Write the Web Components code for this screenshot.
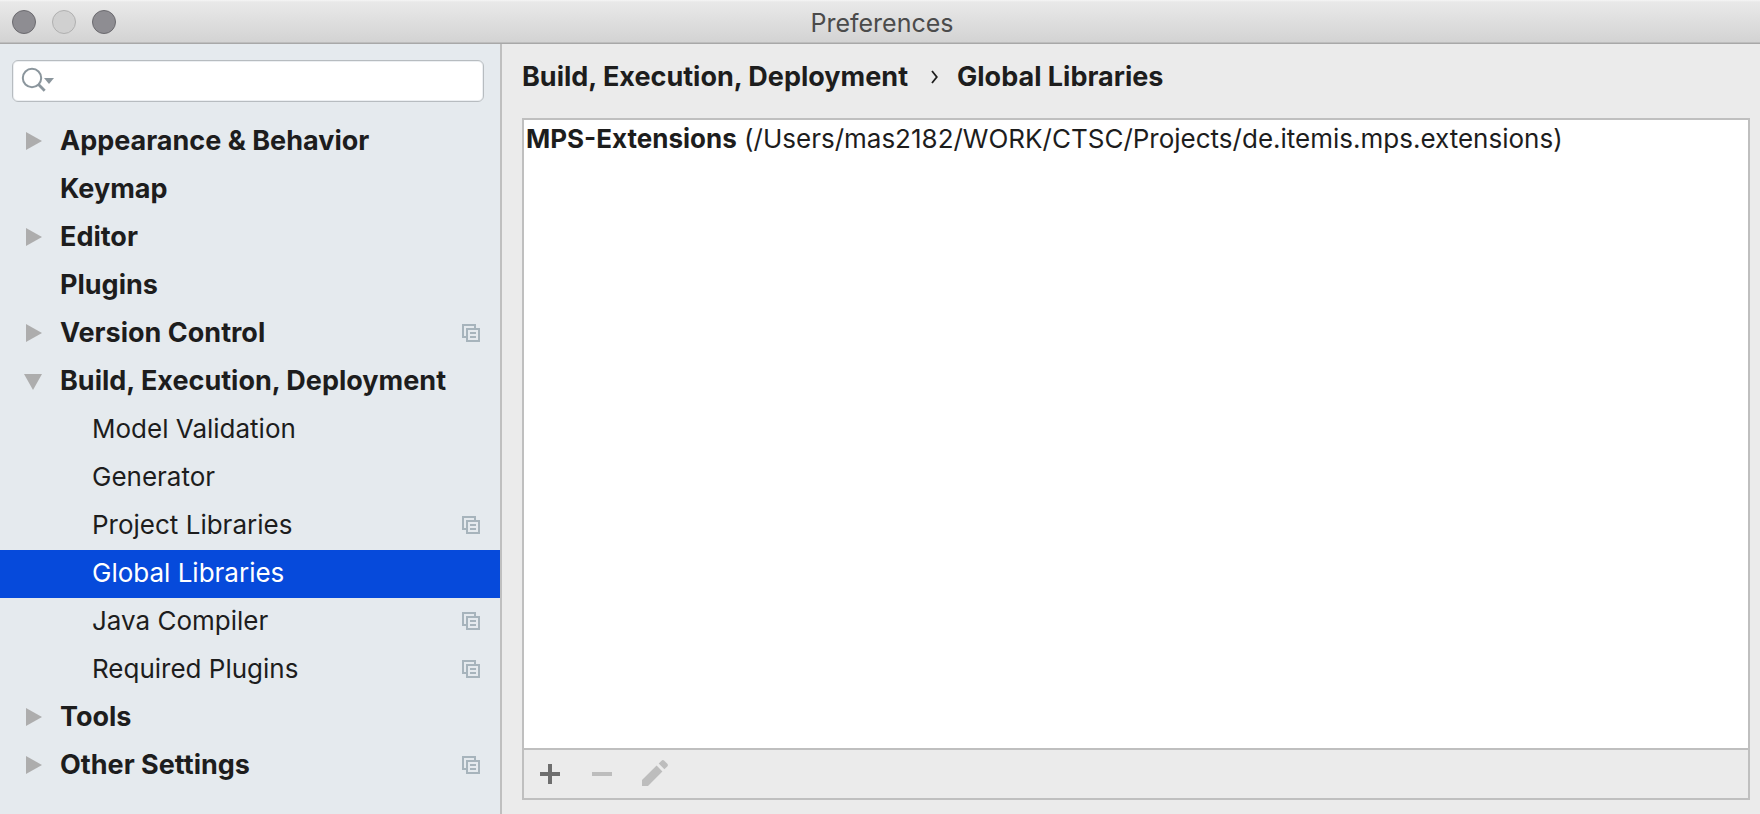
<!DOCTYPE html>
<html lang="en">
<head>
<meta charset="utf-8">
<title>Preferences</title>
<style>
  html, body { height: 100%; margin: 0; }
  body {
    font: 400 26px/48px Inter, "Liberation Sans", sans-serif;
    color: #1d1d1d;
    background: #ebebeb;
    --line: #bfbfbf;
  }
</style>
</head>
<body>
<prefs-window heading="Preferences">
  <search-field slot="sidebar"></search-field>
  <settings-tree slot="sidebar">
    <tree-item state="closed">Appearance &amp; Behavior</tree-item>
    <tree-item state="leaf">Keymap</tree-item>
    <tree-item state="closed">Editor</tree-item>
    <tree-item state="leaf">Plugins</tree-item>
    <tree-item state="closed" project>Version Control</tree-item>
    <tree-item state="open">Build, Execution, Deployment</tree-item>
    <tree-item child>Model Validation</tree-item>
    <tree-item child>Generator</tree-item>
    <tree-item child project>Project Libraries</tree-item>
    <tree-item child selected>Global Libraries</tree-item>
    <tree-item child project>Java Compiler</tree-item>
    <tree-item child project>Required Plugins</tree-item>
    <tree-item state="closed">Tools</tree-item>
    <tree-item state="closed" project>Other Settings</tree-item>
  </settings-tree>
  <crumb-trail><span slot="parent">Build, Execution, Deployment</span><span slot="current">Global Libraries</span></crumb-trail>
  <library-panel>
    <library-entry name="MPS-Extensions">(/Users/mas2182/WORK/CTSC/Projects/de.itemis.mps.extensions)</library-entry>
  </library-panel>
</prefs-window>

<script>
class Base extends HTMLElement {
  connectedCallback() {
    if (this.shadowRoot) return;
    this.attachShadow({ mode: "open" }).innerHTML =
      "<style>*{box-sizing:border-box}:host{box-sizing:border-box}button{font:inherit;color:inherit;background:none;border:0;padding:0;margin:0}svg{display:block}</style>" + this.view();
  }
}

customElements.define("prefs-window", class extends Base {
  view() {
    return `<style>
      :host { display: flex; flex-direction: column; min-height: 100%; height: 100%; }
      header { flex: none; display: grid; grid-template-columns: 1fr auto 1fr; align-items: center; height: 44px; padding: 0 8px 0 12px;
        background: linear-gradient(#f6f6f6, #e9e9e9 2px, #d3d3d3 42px); border-bottom: 1px solid #a8a8a8; box-shadow: inset 0 -1px #bdbdbd; }
      .lights { display: flex; gap: 16px; }
      .lights button { width: 24px; height: 24px; border-radius: 50%; background: #8e8d92; border: 1px solid #6b6a6f; }
      .lights button:nth-child(2) { background: #d0d0d0; border-color: #b0b0b0; }
      h1 { margin: 0; padding-top: 2px; font-size: 25px; line-height: 40px; font-weight: 400; color: #4b4b4b; }
      .body { flex: 1; display: flex; min-height: 0; }
      aside { flex: none; width: 502px; background: #e5eaee; border-right: 2px solid var(--line); padding-top: 16px; display: flex; flex-direction: column; gap: 16px; }
      main { flex: 1; min-width: 0; display: flex; flex-direction: column; padding: 9px 10px 14px 20px; gap: 17px; }
    </style>
    <header>
      <div class="lights"><button aria-label="Close"></button><button aria-label="Minimize" disabled></button><button aria-label="Zoom"></button></div>
      <h1>${this.getAttribute("heading")}</h1>
    </header>
    <div class="body"><aside><slot name="sidebar"></slot></aside><main><slot></slot></main></div>`;
  }
});

customElements.define("search-field", class extends Base {
  view() {
    return `<style>
      :host { display: flex; height: 42px; margin: 0 16px 0 12px; background: #fff; border: 1px solid #b7bcc0; border-radius: 6px; box-shadow: inset 0 0 0 1px #eceff2; }
      button { flex: none; width: 44px; padding-left: 7px; }
      input { flex: 1; min-width: 0; border: 0; outline: 0; background: none; font: inherit; line-height: 32px; color: inherit; padding: 0 8px 0 0; }
    </style>
    <button aria-label="Search history"><svg width="36" height="28" viewBox="0 0 36 28" fill="none" stroke="#8b969d"><circle cx="12" cy="11" r="9.2" stroke-width="2"/><path d="M18.3 17.3l6.4 6.4" stroke-width="2.8"/><path d="M24 11h10l-5 6z" fill="#8b969d" stroke="none"/></svg></button>
    <input type="text" aria-label="Search settings">`;
  }
});

customElements.define("settings-tree", class extends Base {
  view() {
    return `<style>:host, nav { display: block; }</style><nav aria-label="Settings"><slot></slot></nav>`;
  }
});

customElements.define("tree-item", class extends Base {
  view() {
    const arrows = {
      closed: '<path d="M2 0l16 9-16 9z"/>',
      open: '<path d="M0 2h18l-9 16z"/>'
    };
    const arrow = arrows[this.getAttribute("state")] || "";
    const mark = this.hasAttribute("project")
      ? '<svg class="mark" width="18" height="18" viewBox="0 0 18 18" fill="none" stroke="#a7b4bc" stroke-width="2"><path d="M4 13H1V1h12v3M5 5h12v12H5zM8 9h6M8 13h6"/></svg>' : "";
    return `<style>
      :host { display: block; font-size: 27px; font-weight: 700; }
      :host([child]) { font-size: 26px; font-weight: 400; }
      :host([selected]) { background: #064adb; color: #fff; }
      button { display: flex; align-items: center; width: 100%; height: 48px; padding: 0 20px 2px 24px; line-height: 46px; text-align: left; white-space: nowrap; }
      .arrow { flex: none; margin-right: 18px; }
      :host([child]) .arrow { margin-right: 50px; }
      .label { flex: 1; }
    </style>
    <button><svg class="arrow" width="18" height="18" viewBox="0 0 18 18" fill="#adadad">${arrow}</svg><span class="label"><slot></slot></span>${mark}</button>`;
  }
});

customElements.define("crumb-trail", class extends Base {
  view() {
    return `<style>
      :host { display: flex; align-items: center; height: 48px; font-size: 27px; font-weight: 700; white-space: nowrap; }
      svg { margin: 0 18px 0 23px; }
    </style>
    <slot name="parent"></slot><svg width="8" height="14" viewBox="0 0 8 14" fill="none" stroke="#1d1d1d" stroke-width="1.8"><path d="M1 1l4.8 6L1 13"/></svg><slot name="current"></slot>`;
  }
});

customElements.define("library-panel", class extends Base {
  view() {
    return `<style>
      :host { flex: 1; min-height: 0; display: flex; flex-direction: column; border: 2px solid var(--line); }
      .list { flex: 1; min-height: 0; background: #fff; overflow: hidden; }
      .tools { flex: none; display: flex; height: 50px; border-top: 2px solid var(--line); }
      button { width: 52px; height: 48px; display: grid; place-items: center; }
    </style>
    <div class="list" role="list"><slot></slot></div>
    <div class="tools">
      <button aria-label="Add"><svg width="32" height="32" fill="#6e6e6e"><path d="M6 14h8V6h4v8h8v4h-8v8h-4v-8H6z"/></svg></button>
      <button aria-label="Remove" disabled><svg width="32" height="32" fill="#bdbdbd"><path d="M6 14h20v4H6z"/></svg></button>
      <button aria-label="Edit" disabled><svg width="32" height="32" fill="#bdbdbd"><path d="M4 28v-6L18.6 7.6l5.8 5.8L10 28zM20.7 5.6l2.8-2.9q1.3-1.2 2.8 0l3 3q1.3 1.4 0 2.8l-2.9 2.8z"/></svg></button>
    </div>`;
  }
});

customElements.define("library-entry", class extends Base {
  view() {
    return `<style>:host { display: block; padding: 0 2px; line-height: 38px; white-space: nowrap; } b { font-weight: 700; }</style><b>${this.getAttribute("name")}</b> <slot></slot>`;
  }
  connectedCallback() { this.setAttribute("role", "listitem"); super.connectedCallback(); }
});
</script>
</body>
</html>
